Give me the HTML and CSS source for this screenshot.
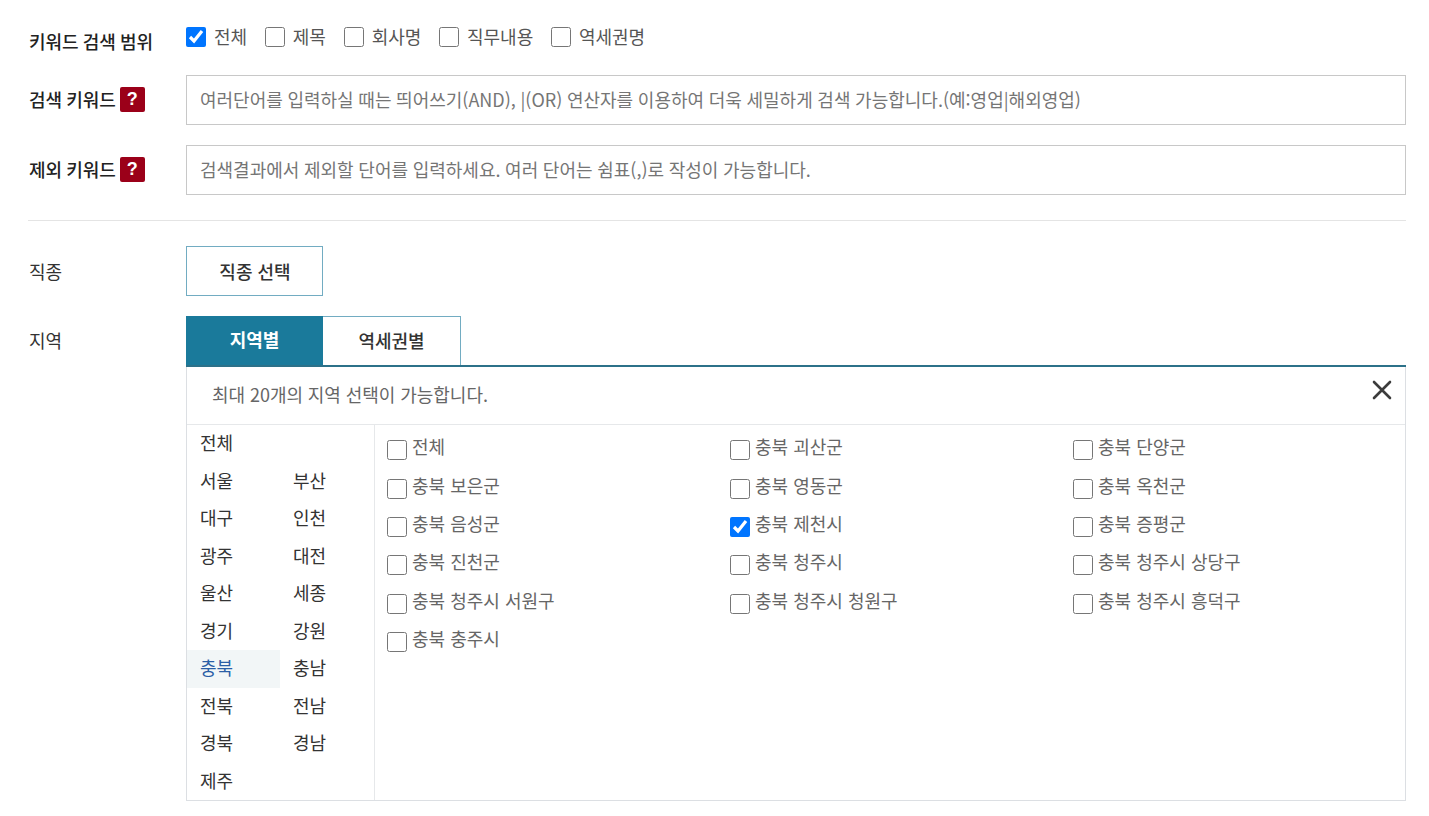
FILE: index.html
```html
<!DOCTYPE html>
<html lang="ko">
<head>
<meta charset="utf-8">
<title>상세검색</title>
<link rel="stylesheet" href="styles.css">
</head>
<body>
<form class="form">
  <div class="row row-scope">
    <div class="label label-strong">키워드 검색 범위</div>
    <div class="scope">
      <label class="check"><input type="checkbox" checked><span>전체</span></label>
      <label class="check"><input type="checkbox"><span>제목</span></label>
      <label class="check"><input type="checkbox"><span>회사명</span></label>
      <label class="check"><input type="checkbox"><span>직무내용</span></label>
      <label class="check"><input type="checkbox"><span>역세권명</span></label>
    </div>
  </div>
  <div class="row row-input">
    <div class="label label-strong">검색 키워드<span class="help">?</span></div>
    <input class="text" type="text" placeholder="여러단어를 입력하실 때는 띄어쓰기(AND), |(OR) 연산자를 이용하여 더욱 세밀하게 검색 가능합니다.(예:영업|해외영업)">
  </div>
  <div class="row row-input">
    <div class="label label-strong">제외 키워드<span class="help">?</span></div>
    <input class="text" type="text" placeholder="검색결과에서 제외할 단어를 입력하세요. 여러 단어는 쉼표(,)로 작성이 가능합니다.">
  </div>
  <hr class="divider">
  <div class="row row-job">
    <div class="label">직종</div>
    <button class="job-btn" type="button">직종 선택</button>
  </div>
  <div class="row row-region">
    <div class="label label-region">지역</div>
    <div class="region">
      <div class="tabs">
        <button class="tab tab-active" type="button">지역별</button>
        <button class="tab" type="button">역세권별</button>
      </div>
      <div class="panel">
        <div class="panel-head">
          <span>최대 20개의 지역 선택이 가능합니다.</span>
          <svg class="close" width="20" height="20" viewBox="0 0 20 20" aria-hidden="true"><path d="M2 2 L18 18 M18 2 L2 18" stroke="#3c3c3c" stroke-width="2.6" stroke-linecap="round" fill="none"/></svg>
        </div>
        <div class="panel-body">
          <ul class="areas">
            <li class="area area-wide">전체</li>
            <li class="area">서울</li><li class="area">부산</li>
            <li class="area">대구</li><li class="area">인천</li>
            <li class="area">광주</li><li class="area">대전</li>
            <li class="area">울산</li><li class="area">세종</li>
            <li class="area">경기</li><li class="area">강원</li>
            <li class="area area-on">충북</li><li class="area">충남</li>
            <li class="area">전북</li><li class="area">전남</li>
            <li class="area">경북</li><li class="area">경남</li>
            <li class="area">제주</li>
          </ul>
          <div class="cities">
            <label class="city"><input type="checkbox"><span>전체</span></label>
            <label class="city"><input type="checkbox"><span>충북 괴산군</span></label>
            <label class="city"><input type="checkbox"><span>충북 단양군</span></label>
            <label class="city"><input type="checkbox"><span>충북 보은군</span></label>
            <label class="city"><input type="checkbox"><span>충북 영동군</span></label>
            <label class="city"><input type="checkbox"><span>충북 옥천군</span></label>
            <label class="city"><input type="checkbox"><span>충북 음성군</span></label>
            <label class="city"><input type="checkbox" checked><span>충북 제천시</span></label>
            <label class="city"><input type="checkbox"><span>충북 증평군</span></label>
            <label class="city"><input type="checkbox"><span>충북 진천군</span></label>
            <label class="city"><input type="checkbox"><span>충북 청주시</span></label>
            <label class="city"><input type="checkbox"><span>충북 청주시 상당구</span></label>
            <label class="city"><input type="checkbox"><span>충북 청주시 서원구</span></label>
            <label class="city"><input type="checkbox"><span>충북 청주시 청원구</span></label>
            <label class="city"><input type="checkbox"><span>충북 청주시 흥덕구</span></label>
            <label class="city"><input type="checkbox"><span>충북 충주시</span></label>
          </div>
        </div>
      </div>
    </div>
  </div>
</form>
</body>
</html>
```
FILE: styles.css
```css
* { box-sizing: border-box; }
html, body { margin: 0; padding: 0; background: #fff; overflow: hidden; }
body {
  height: 816px;
  font-family: "Noto Sans CJK KR", "Noto Sans", sans-serif;
  font-size: 18px;
  color: #333;
}
.form { width: 1378px; margin-left: 28px; padding-top: 22px; }
.row { display: flex; align-items: center; }
.label { width: 158px; flex: none; padding-left: 1px; font-size: 18px; line-height: 26px; color: #333; display: flex; align-items: center; }
.label-strong { font-weight: 500; color: #222; word-spacing: -1px; }
.row-scope { height: 33px; }
.row-scope .label { position: relative; top: 2px; }
.row-input .label { height: 50px; padding-bottom: 2px; }
.scope { display: flex; gap: 17.7px; margin-bottom: 6px; }
.check { display: flex; align-items: center; gap: 8px; line-height: 26px; color: #555; }
input[type="checkbox"] { width: 20px; height: 20px; margin: 0; flex: none; accent-color: #0075ff; }
.check input { position: relative; top: 1px; }
.row-input { margin-top: 20px; height: 50px; }
.help {
  width: 25px; height: 25px; margin-left: 4px; border-radius: 2px;
  background: #9b0019; color: #fff; font: 700 18px/25px "Liberation Sans", sans-serif;
  text-align: center;
}
.text {
  flex: 1; height: 50px; padding: 0 13px 2px; border: 1px solid #c8c8c8; background: #fff;
  font: 18px "Noto Sans CJK KR", sans-serif; color: #333; outline: 0; word-spacing: -0.4px;
}
.text::placeholder { color: #757575; opacity: 1; }
.divider { margin: 25px 0 0; height: 1px; border: 0; background: #e4e4e4; }
.row-job { margin-top: 25px; height: 50px; }
.job-btn {
  width: 137px; height: 50px; padding: 0 0 0 1px; background: #fff; border: 1px solid #72acc2;
  font: 500 18px "Noto Sans CJK KR", sans-serif; color: #333;
}
.row-region { margin-top: 20px; align-items: flex-start; }
.label-region { height: 48px; }
.region { flex: 1; min-width: 0; }
.tabs { display: flex; height: 51px; border-bottom: 2px solid #2c7189; }
.tab {
  height: 49px; padding: 0 0 3px; background: #fff; border: 1px solid #72acc2; border-left: 0; border-bottom: 0;
  font: 500 18px "Noto Sans CJK KR", sans-serif; color: #333; width: 138px;
}
.tab-active { width: 137px; background: #1a7a9b; border: 0; color: #fff; font-weight: 700; }
.panel { border: 1px solid #dcdfe3; border-top: 0; height: 434px; display: flex; flex-direction: column; }
.panel-head {
  flex: none; height: 58px; padding: 0 13px 0 25px; display: flex; align-items: center;
  justify-content: space-between; border-bottom: 1px solid #e6e8ea; color: #666; font-size: 18px;
}
.panel-head span { position: relative; top: -2px; word-spacing: -0.25px; }
.close { position: relative; top: -6px; }
.panel-body { flex: 1; display: flex; min-height: 0; }
.areas {
  list-style: none; margin: 0; padding: 0; width: 188px; flex: none; border-right: 1px solid #e6e8ea;
  display: grid; grid-template-columns: 93px 94px; grid-auto-rows: 37.5px; align-content: start;
}
.area { padding-left: 13px; line-height: 35.5px; color: #333; }
.area-wide { grid-column: 1 / -1; }
.area-on { background: #f2f6f7; color: #2a5ea6; }
.cities {
  flex: 1; display: grid; grid-template-columns: repeat(3, 343px); grid-auto-rows: 38.4px;
  align-content: start; padding: 5px 0 0 12px;
}
.city { display: flex; align-items: center; gap: 5px; color: #666; }
.city input { position: relative; top: 1px; }
.city span { position: relative; top: -3px; }
```
